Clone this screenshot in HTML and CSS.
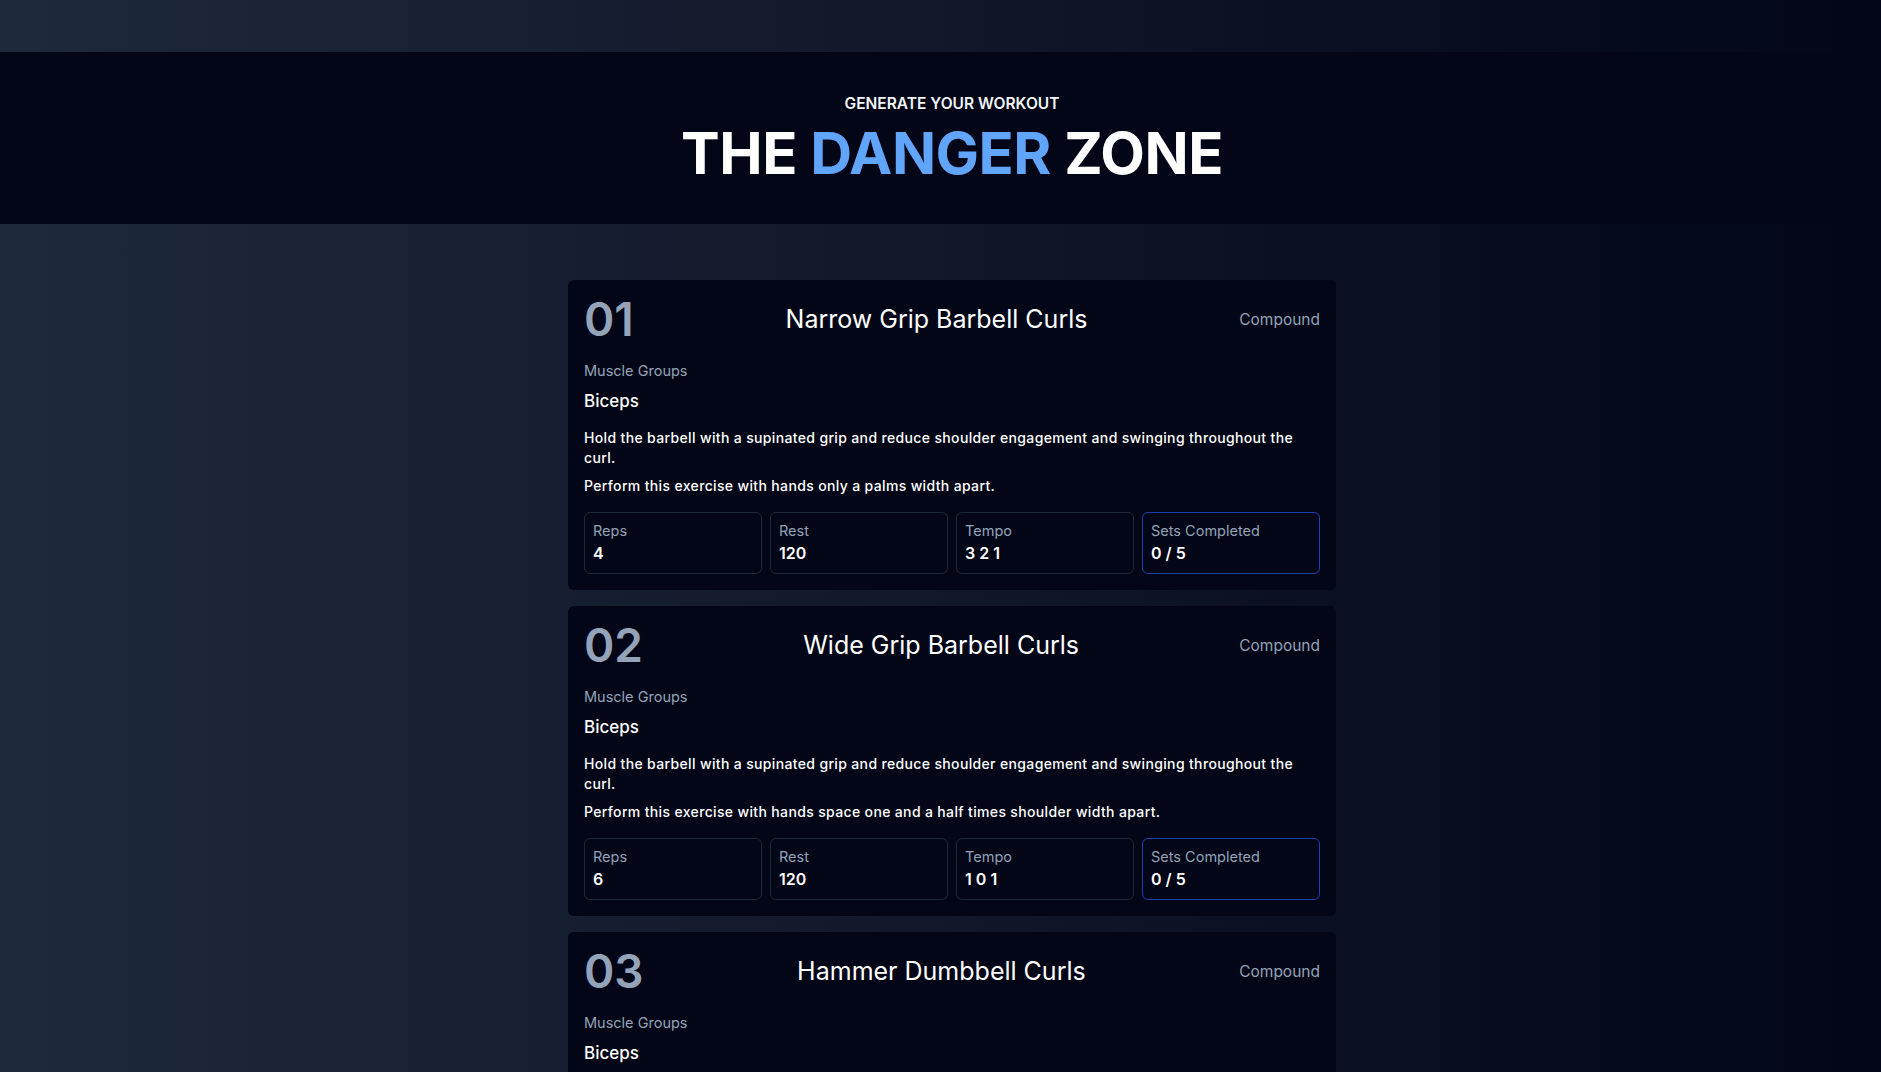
FILE: index.html
```html
<!DOCTYPE html>
<html lang="en">
<head>
<meta charset="utf-8">
<title>The Danger Zone</title>
<link rel="stylesheet" href="styles.css">
</head>
<body>
<div class="page">
  <div class="top-space"></div>
  <header class="hero">
    <p class="eyebrow">GENERATE YOUR WORKOUT</p>
    <h1 class="title">THE <span class="accent">DANGER</span> ZONE</h1>
  </header>
  <main class="main">
    <div class="list">
      <section class="card">
        <div class="card-head">
          <span class="num">01</span>
          <h2 class="name">Narrow Grip Barbell Curls</h2>
          <span class="type">Compound</span>
        </div>
        <p class="label">Muscle Groups</p>
        <p class="muscles">Biceps</p>
        <div class="desc">
          <p>Hold the barbell with a supinated grip and reduce shoulder engagement and swinging throughout the curl.</p>
          <p>Perform this exercise with hands only a palms width apart.</p>
        </div>
        <div class="stats">
          <div class="stat"><span class="stat-label">Reps</span><span class="stat-value">4</span></div>
          <div class="stat"><span class="stat-label">Rest</span><span class="stat-value">120</span></div>
          <div class="stat"><span class="stat-label">Tempo</span><span class="stat-value">3 2 1</span></div>
          <div class="stat stat-sets"><span class="stat-label">Sets Completed</span><span class="stat-value">0 / 5</span></div>
        </div>
      </section>
      <section class="card">
        <div class="card-head">
          <span class="num">02</span>
          <h2 class="name">Wide Grip Barbell Curls</h2>
          <span class="type">Compound</span>
        </div>
        <p class="label">Muscle Groups</p>
        <p class="muscles">Biceps</p>
        <div class="desc">
          <p>Hold the barbell with a supinated grip and reduce shoulder engagement and swinging throughout the curl.</p>
          <p>Perform this exercise with hands space one and a half times shoulder width apart.</p>
        </div>
        <div class="stats">
          <div class="stat"><span class="stat-label">Reps</span><span class="stat-value">6</span></div>
          <div class="stat"><span class="stat-label">Rest</span><span class="stat-value">120</span></div>
          <div class="stat"><span class="stat-label">Tempo</span><span class="stat-value">1 0 1</span></div>
          <div class="stat stat-sets"><span class="stat-label">Sets Completed</span><span class="stat-value">0 / 5</span></div>
        </div>
      </section>
      <section class="card">
        <div class="card-head">
          <span class="num">03</span>
          <h2 class="name">Hammer Dumbbell Curls</h2>
          <span class="type">Compound</span>
        </div>
        <p class="label">Muscle Groups</p>
        <p class="muscles">Biceps</p>
        <div class="desc">
          <p>Hold the dumbbells with a neutral grip and reduce shoulder engagement and swinging throughout the curl.</p>
          <p>Keep your elbows tucked in at your sides for the whole movement.</p>
        </div>
        <div class="stats">
          <div class="stat"><span class="stat-label">Reps</span><span class="stat-value">8</span></div>
          <div class="stat"><span class="stat-label">Rest</span><span class="stat-value">90</span></div>
          <div class="stat"><span class="stat-label">Tempo</span><span class="stat-value">2 0 2</span></div>
          <div class="stat stat-sets"><span class="stat-label">Sets Completed</span><span class="stat-value">0 / 5</span></div>
        </div>
      </section>
    </div>
  </main>
</div>
</body>
</html>
```

FILE: styles.css
```css
* { box-sizing: border-box; }
html, body { margin: 0; padding: 0; }
body {
  font-family: "Inter", "Noto Sans", sans-serif;
  color: #f8fafc;
  background: #020617;
}
p, h1, h2 { margin: 0; }
.page {
  min-height: 100vh;
  background: linear-gradient(to right, #1e293b, #020617);
  padding-bottom: 40px;
}
.top-space { height: 52px; }
.hero {
  background: #020617;
  height: 172px;
  display: flex;
  flex-direction: column;
  align-items: center;
  padding-left: 23px;
  padding-top: 40px;
}
.eyebrow {
  font-size: 15.5px;
  font-weight: 600;
  line-height: 24px;
  color: #f1f5f9;
}
.title {
  font-size: 58px;
  font-weight: 700;
  line-height: 60px;
  margin-top: 7px;
  color: #ffffff;
  letter-spacing: -0.5px;
}
.accent { color: #60a5fa; }
.main {
  padding: 56px 0 0 23px;
}
.list {
  max-width: 768px;
  margin: 0 auto;
  display: flex;
  flex-direction: column;
  gap: 16px;
}
.card {
  background: #020617;
  border-radius: 6px;
  padding: 15px 16px 16px;
}
.card-head {
  display: flex;
  justify-content: space-between;
  align-items: center;
  height: 48px;
}
.num {
  font-size: 46px;
  font-weight: 600;
  line-height: 48px;
  color: #94a3b8;
}
.name {
  font-size: 25px;
  font-weight: 400;
  line-height: 32px;
  color: #ffffff;
}
.type {
  font-size: 15.5px;
  color: #94a3b8;
  line-height: 20px;
  margin-top: 2px;
}
.label {
  margin-top: 18px;
  font-size: 14.5px;
  line-height: 20px;
  color: #94a3b8;
}
.muscles {
  margin-top: 8px;
  font-size: 17px;
  line-height: 24px;
  font-weight: 500;
  color: #ffffff;
}
.desc {
  margin-top: 15px;
  display: flex;
  flex-direction: column;
  gap: 8px;
  font-size: 14px;
  line-height: 20px;
  font-weight: 500;
  letter-spacing: 0.35px;
  color: #ffffff;
}
.stats {
  margin-top: 16px;
  display: grid;
  grid-template-columns: repeat(4, 1fr);
  gap: 8px;
}
.stat {
  border: 1px solid #1e293b;
  border-radius: 6px;
  padding: 8px;
  display: flex;
  flex-direction: column;
}
.stat-sets { border-color: #1e40af; }
.stat-label {
  font-size: 14.5px;
  line-height: 20px;
  color: #94a3b8;
}
.stat-value {
  font-size: 16px;
  line-height: 24px;
  font-weight: 600;
  color: #ffffff;
}
```
